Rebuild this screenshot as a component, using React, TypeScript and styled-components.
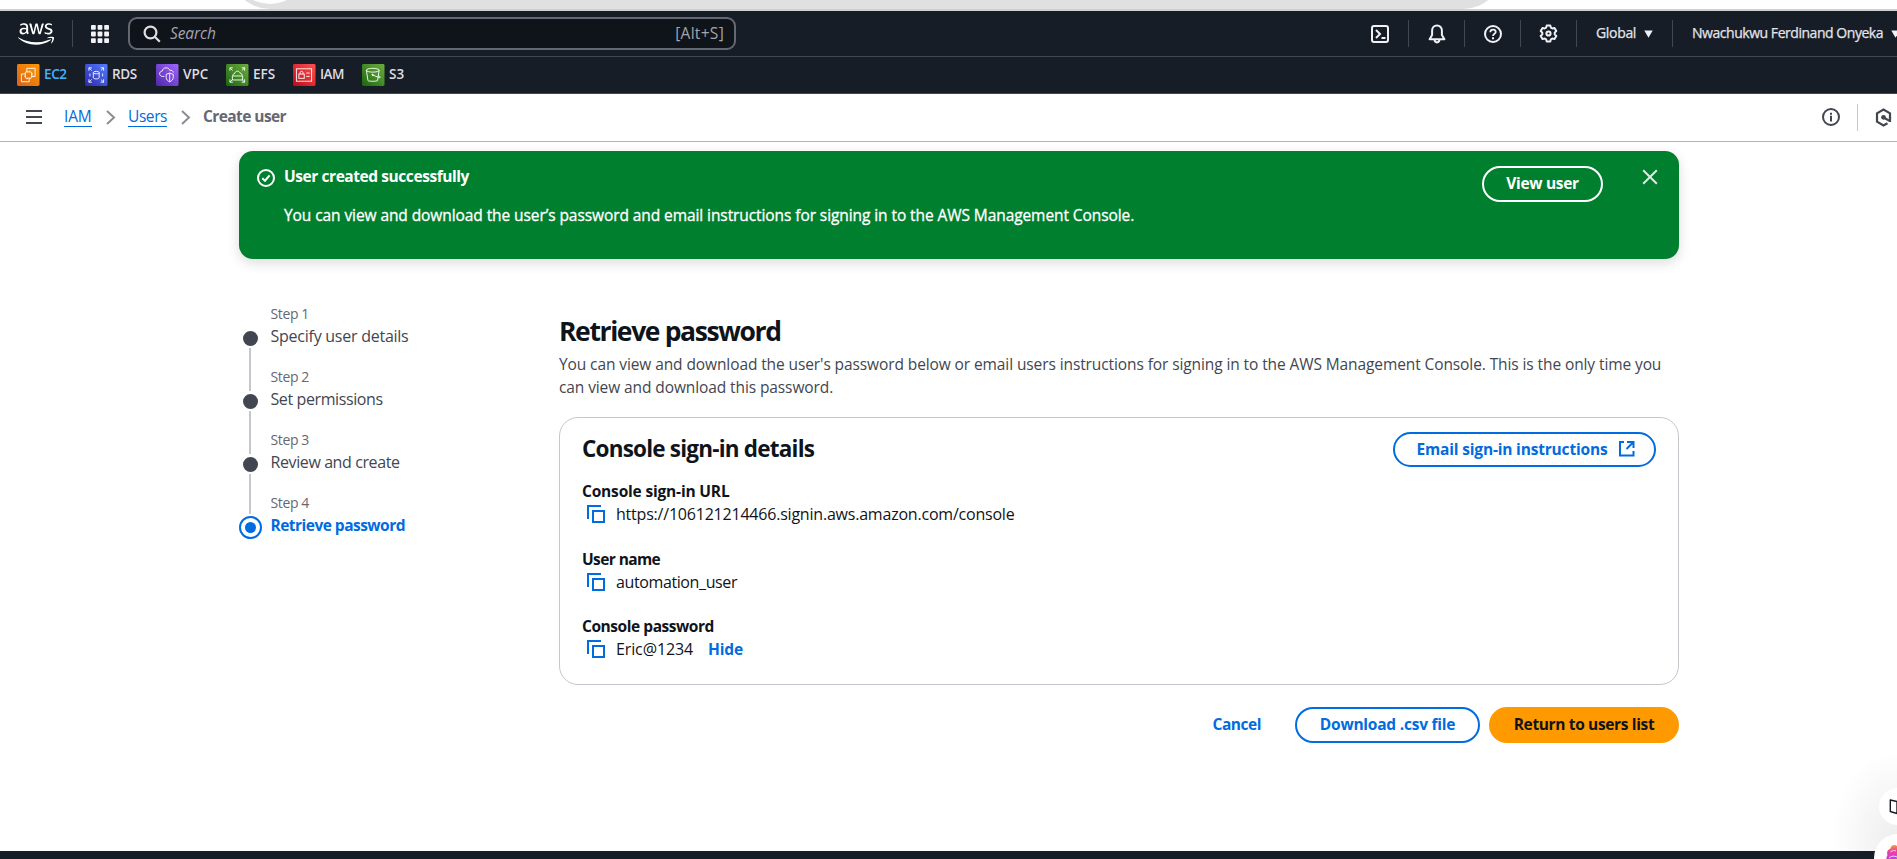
import React from "react";
import styled, { createGlobalStyle, css } from "styled-components";
import { FaAws } from "react-icons/fa";

const GlobalStyle = createGlobalStyle`
  *, *::before, *::after { box-sizing: border-box; }
  html, body { margin: 0; padding: 0; background: #fff; overflow: hidden; }
  body { font-family: "Open Sans", "Noto Sans", sans-serif; color: #0f141a; }
  h1, h2, p, ol { margin: 0; padding: 0; }
  svg { display: block; flex: none; }
`;

const Page = styled.div`
  position: relative;
  display: flex;
  flex-direction: column;
  height: 100vh;
  overflow: hidden;
`;

const tracked = css<{ $track?: number }>`
  letter-spacing: ${(p) => p.$track ?? 0}px;
  white-space: nowrap;
`;

/* ---------- browser chrome edge ---------- */

const ChromeEdge = styled.div`
  position: relative;
  flex: none;
  height: 11px;
  overflow: hidden;
  border-bottom: 2px solid #cdd1cf;
`;

const AddressPill = styled.div`
  position: absolute;
  left: 230px;
  bottom: 0.5px;
  width: 1273px;
  height: 80px;
  border-radius: 40px;
  background: #e0e0e0;
`;

const PillBadge = styled.div`
  position: absolute;
  left: 2px;
  bottom: 4.5px;
  width: 76px;
  height: 76px;
  border-radius: 50%;
  background: #fff;
`;

/* ---------- console header ---------- */

const TopNav = styled.header`
  flex: none;
  display: flex;
  align-items: flex-start;
  height: 46px;
  padding: 6px 0 0 18px;
  background: #161d26;
  border-bottom: 1px solid #424650;
  color: #e4e4ea;
`;

const Divider = styled.span<{ $light?: boolean }>`
  flex: none;
  width: 1px;
  height: 27px;
  background: ${(p) => (p.$light ? "#c6c6cd" : "#424650")};
`;

const NavBrand = styled.div`
  flex: none;
  display: flex;
  align-items: center;
  height: 33px;
  width: 110px;
`;

const LogoBox = styled.div`
  flex: none;
  width: 36px;
  margin-right: 18px;
  color: #fff;
`;

const MenuButton = styled.div`
  margin-left: 18px;
`;

const SearchBox = styled.div`
  flex: none;
  display: flex;
  align-items: center;
  width: 608px;
  height: 33px;
  padding: 0 10px 0 13px;
  border: 2px solid #656871;
  border-radius: 9px;
  background: #0f141a;
  color: #a4a4ad;
`;

const Placeholder = styled.span`
  margin-left: 9px;
  padding-bottom: 1px;
  font-size: 15.5px;
  line-height: 22px;
  font-style: italic;
  ${tracked}
`;

const Shortcut = styled.span`
  margin-left: auto;
  padding-bottom: 1px;
  font-size: 15.5px;
  line-height: 22px;
  ${tracked}
`;

const NavTools = styled.div`
  flex: none;
  display: flex;
  align-items: center;
  height: 33px;
  margin-left: 635px;
`;

const ShellIcon = styled.div`
  flex: none;
  width: 37px;
`;

const ToolIcon = styled.div`
  flex: none;
  display: flex;
  justify-content: center;
  width: 55px;
`;

const NavMenu = styled.div<{ $width: number }>`
  flex: none;
  display: flex;
  align-items: center;
  width: ${(p) => p.$width}px;
  padding-left: 19px;
  gap: 8px;
`;

const NavLabel = styled.span`
  padding-bottom: 2px;
  font-size: 14px;
  line-height: 20px;
  -webkit-text-stroke: 0.25px currentColor;
  ${tracked}
`;

const Favorites = styled.nav`
  flex: none;
  display: flex;
  height: 37px;
  padding: 7px 0 0 17px;
  background: #161d26;
  border-bottom: 1px solid #424650;
`;

const Favorite = styled.a<{ $width: number; $active?: boolean }>`
  flex: none;
  display: flex;
  gap: 4.5px;
  width: ${(p) => p.$width}px;
  height: 22px;
  color: ${(p) => (p.$active ? "#42b4ff" : "#dedee3")};
`;

const FavoriteLabel = styled.span`
  font-size: 13.5px;
  line-height: 20px;
  font-weight: 600;
  ${tracked}
`;

/* ---------- breadcrumbs ---------- */

const CrumbBar = styled.div`
  flex: none;
  display: flex;
  align-items: center;
  height: 48px;
  padding: 0 0 1px 26px;
  border-bottom: 1px solid #b4b4bb;
`;

const Crumbs = styled.div`
  display: flex;
  align-items: center;
  margin-left: 22px;
`;

const CrumbLink = styled.a<{ $width: number }>`
  width: ${(p) => p.$width}px;
  height: 20px;
  border-bottom: 1px solid #006ce0;
  color: #006ce0;
  font-size: 15.5px;
  line-height: 18px;
  ${tracked}
`;

const CrumbChevron = styled.span`
  width: 36px;
  padding-left: 14px;
`;

const CrumbCurrent = styled.span`
  padding-bottom: 2px;
  color: #656871;
  font-size: 15.5px;
  line-height: 20px;
  font-weight: 700;
  ${tracked}
`;

const CrumbTools = styled.div`
  display: flex;
  align-items: center;
  width: 75px;
  margin-left: auto;
  gap: 17px;
`;

/* ---------- content ---------- */

const Content = styled.main`
  flex: 1;
  width: 1440px;
  margin-left: 239px;
  padding-top: 9px;
`;

const Flash = styled.section`
  display: flex;
  height: 108px;
  padding: 13px 21px 0 18px;
  border-radius: 14px;
  background: #00802f;
  color: #fff;
  box-shadow: 0 4px 12px 1px rgba(0, 7, 22, 0.12);
`;

const FlashIcon = styled.div`
  width: 27px;
  padding-top: 5px;
`;

const FlashBody = styled.div`
  flex: 1;
  display: flex;
  flex-direction: column;
  gap: 15px;
  font-size: 15.5px;
  line-height: 24px;
`;

const FlashTitle = styled.div`
  font-weight: 700;
  ${tracked}
`;

const FlashText = styled.div`
  -webkit-text-stroke: 0.3px currentColor;
  ${tracked}
`;

const CloseButton = styled.button`
  width: 16px;
  height: 16px;
  margin: 5px 0 0 39px;
  padding: 0;
  border: 0;
  background: none;
  color: #dfe9e2;
`;

type Tone = "onColor" | "outline" | "primary";

const tones: Record<Tone, string> = {
  onColor: "border-color: #fff; color: #fff; background: transparent;",
  outline: "border-color: #006ce0; color: #006ce0; background: #fff;",
  primary: "border-color: #ff9900; color: #0f141a; background: #ff9900;",
};

const Button = styled.button<{ $tone: Tone; $width: number; $height?: number; $track?: number; $iconEnd?: boolean }>`
  flex: none;
  display: flex;
  align-items: center;
  justify-content: center;
  gap: 11px;
  width: ${(p) => p.$width}px;
  height: ${(p) => p.$height ?? 36}px;
  padding: 0 0 2px ${(p) => (p.$iconEnd ? 3 : 0)}px;
  border: 2px solid;
  border-radius: 18px;
  font: 700 15.5px/24px "Open Sans", sans-serif;
  ${(p) => tones[p.$tone]}
  ${tracked}
`;

const FlashAction = styled.div`
  padding-top: 2px;
`;

const Wizard = styled.div`
  display: flex;
  padding-top: 45px;
`;

const StepList = styled.ol`
  width: 320px;
  list-style: none;
`;

const Step = styled.li`
  display: flex;
  gap: 8.5px;
  height: 63px;
`;

const StepRail = styled.div<{ $active?: boolean }>`
  flex: none;
  display: flex;
  flex-direction: column;
  width: 23px;
  height: 63px;
  padding-top: ${(p) => (p.$active ? 22.5 : 26.5)}px;
`;

const StepDot = styled.span<{ $active?: boolean }>`
  flex: none;
  ${(p) =>
    p.$active
      ? css`
          display: flex;
          align-items: center;
          justify-content: center;
          width: 23px;
          height: 23px;
          border: 2px solid #006ce0;
          border-radius: 50%;
          &::after {
            content: "";
            width: 11px;
            height: 11px;
            border-radius: 50%;
            background: #006ce0;
          }
        `
      : css`
          width: 15.5px;
          height: 15.5px;
          margin-left: 3.5px;
          border-radius: 50%;
          background: #424650;
        `}
`;

const StepLine = styled.span<{ $height: number }>`
  flex: none;
  width: 2px;
  height: ${(p) => p.$height}px;
  margin: 2px 0 0 10px;
  background: #c6c6cd;
`;

const StepNumber = styled.div`
  font-size: 14px;
  line-height: 20px;
  color: #656871;
  ${tracked}
`;

const StepName = styled.div<{ $active?: boolean }>`
  font-size: ${(p) => (p.$active ? 15.5 : 16)}px;
  line-height: 24px;
  font-weight: ${(p) => (p.$active ? 700 : 400)};
  color: ${(p) => (p.$active ? "#006ce0" : "#424650")};
  ${tracked}
`;

const Panel = styled.div`
  width: 1120px;
  padding-top: 11px;
`;

const PageTitle = styled.h1`
  font-size: 26.5px;
  line-height: 32px;
  font-weight: 700;
  ${tracked}
`;

const Intro = styled.p`
  margin-top: 6px;
  margin-bottom: 18px;
  color: #424650;
  font-size: 15.5px;
  line-height: 23px;
  ${tracked}
`;

const Card = styled.section`
  height: 268px;
  padding: 14px 22px 0;
  border: 1px solid #c6c6cd;
  border-radius: 19px;
`;

const CardHeader = styled.div`
  display: flex;
  justify-content: space-between;
  height: 48px;
`;

const CardTitle = styled.h2`
  padding-top: 3px;
  font-size: 22.5px;
  line-height: 28px;
  font-weight: 700;
  ${tracked}
`;

const Field = styled.div<{ $height: number }>`
  height: ${(p) => p.$height}px;
`;

const FieldLabel = styled.div`
  font-size: 15.5px;
  line-height: 22px;
  font-weight: 700;
  ${tracked}
`;

const FieldValue = styled.div`
  display: flex;
  align-items: center;
  height: 24px;
  padding-left: 5px;
`;

const FieldText = styled.span`
  margin-left: 11px;
  font-size: 16px;
  line-height: 24px;
  ${tracked}
`;

const InlineAction = styled.a`
  margin-left: 15px;
  color: #006ce0;
  font-size: 15.5px;
  line-height: 24px;
  font-weight: 700;
  ${tracked}
`;

const Actions = styled.div`
  display: flex;
  justify-content: flex-end;
  align-items: center;
  gap: 9px;
  margin-top: 22px;
`;

const CancelLink = styled.a`
  margin-right: 25px;
  padding-bottom: 2px;
  color: #006ce0;
  font-size: 15.5px;
  line-height: 24px;
  font-weight: 700;
  ${tracked}
`;

const FooterBar = styled.footer`
  flex: none;
  height: 8px;
  background: #161d26;
`;

/* ---------- floating extension bubbles ---------- */

const Bubble = styled.div<{ $size: number; $top: number; $left: number }>`
  position: absolute;
  left: ${(p) => p.$left}px;
  top: ${(p) => p.$top}px;
  display: flex;
  align-items: center;
  justify-content: center;
  width: ${(p) => p.$size}px;
  height: ${(p) => p.$size}px;
  border-radius: 50%;
  background: #fff;
`;

const BubbleShade = styled.div`
  position: absolute;
  left: 1827px;
  top: 750px;
  width: 70px;
  height: 101px;
  background: radial-gradient(ellipse 66px 88px at 70px 88px, rgba(0, 0, 0, 0.07), rgba(0, 0, 0, 0.03) 55%, transparent);
`;

/* ---------- icons ---------- */

const MenuGrid = () => (
  <svg width="18" height="18" viewBox="0 0 18 18" fill="#f3f3f7">
    {[0, 6.6, 13.2].map((y) => [0, 6.6, 13.2].map((x) => <rect key={`${x}-${y}`} x={x} y={y} width="4.8" height="4.8" rx="0.8" />))}
  </svg>
);

const SearchIcon = () => (
  <svg width="18" height="18" viewBox="0 0 18 18" fill="none" stroke="#dedee3" strokeWidth="2.2">
    <circle cx="7.5" cy="7.5" r="5.9" />
    <path d="M12 12l4.8 4.8" />
  </svg>
);

const TerminalIcon = () => (
  <svg width="18" height="18" viewBox="0 0 18 18" fill="none" stroke="#f0f0f5" strokeWidth="2">
    <rect x="1" y="1" width="16" height="16" rx="2" />
    <path d="M5 5l4 4-4 4M10.5 13h4" />
  </svg>
);

const BellIcon = () => (
  <svg width="18" height="20" viewBox="0 0 18 20" fill="none" stroke="#f0f0f5" strokeWidth="2" strokeLinejoin="round">
    <path d="M9 1.6c-3 0-4.9 2.2-4.9 5V11L1.6 15.2h14.8L13.9 11V6.6c0-2.8-1.9-5-4.9-5z" />
    <path d="M6.6 15.6c0 1.7.9 2.8 2.4 2.8s2.4-1.1 2.4-2.8" />
  </svg>
);

const HelpIcon = () => (
  <svg width="18" height="18" viewBox="0 0 18 18" fill="none" stroke="#f0f0f5" strokeWidth="2">
    <circle cx="9" cy="9" r="8" />
    <path d="M6.3 7.2C6.3 5.6 7.4 4.7 9 4.700s2.700.9 2.700 2.300C11.700 8.900 9 8.700 9 11" strokeWidth="1.8" />
    <path d="M9 12.300v2" />
  </svg>
);

const GearIcon = () => (
  <svg width="19" height="19" viewBox="0 0 19 19" fill="none" stroke="#f0f0f5" strokeWidth="2" strokeLinejoin="round">
    <path d="M7.700 1.500h3.600l.6 2.200 1.400.8 2.200-.6 1.800 3.100-1.600 1.600v1.800l1.600 1.600-1.800 3.100-2.200-.6-1.400.8-.6 2.200H7.700l-.6-2.200-1.400-.8-2.200.6L1.700 12l1.600-1.600V8.600L1.700 7l1.800-3.100 2.200.6 1.400-.8z" />
    <circle cx="9.500" cy="9.500" r="2.100" />
  </svg>
);

const Caret = () => (
  <svg width="9" height="8" viewBox="0 0 9 8" fill="#f0f0f5">
    <path d="M0.300 0.500h8.400L4.500 7.800z" />
  </svg>
);

const HamburgerIcon = () => (
  <svg width="16" height="16" viewBox="0 0 16 16" stroke="#424650" strokeWidth="2">
    <path d="M0 2h16M0 8h16M0 14h16" />
  </svg>
);

const ChevronIcon = () => (
  <svg width="10" height="15" viewBox="0 0 10 15" fill="none" stroke="#8c8c94" strokeWidth="2">
    <path d="M1 1l7 6.500L1 14" />
  </svg>
);

const InfoIcon = () => (
  <svg width="18" height="18" viewBox="0 0 18 18" fill="none" stroke="#424650" strokeWidth="2">
    <circle cx="9" cy="9" r="8" />
    <path d="M9 7.800v5.700M9 4.700v2" />
  </svg>
);

const HexIcon = () => (
  <svg width="17" height="19" viewBox="0 0 17 19" fill="none" stroke="#424650" strokeWidth="2.200">
    <path d="M15 10.500V5.300L8.500 1.500 2 5.300v8.400l6.500 3.800 4-2.300" />
    <path d="M8.500 9.500l6.500 3.600" />
    <circle cx="8.500" cy="9.300" r="2.400" fill="#424650" stroke="none" />
    <path d="M15 9v5" />
  </svg>
);

const CheckCircle = () => (
  <svg width="18" height="18" viewBox="0 0 18 18" fill="none" stroke="#fff" strokeWidth="2">
    <circle cx="9" cy="9" r="8" />
    <path d="M5.300 9.300L8 11.700l4.600-5.400" />
  </svg>
);

const CloseIcon = () => (
  <svg width="16" height="16" viewBox="0 0 16 16" fill="none" stroke="currentColor" strokeWidth="2">
    <path d="M1.200 1.200l13.600 13.600M14.800 1.200L1.200 14.800" />
  </svg>
);

const CopyIcon = () => (
  <svg width="18" height="18" viewBox="0 0 18 18" fill="none" stroke="#006ce0" strokeWidth="2">
    <path d="M1 14V1h13" />
    <rect x="6" y="6" width="11" height="11" />
  </svg>
);

const ExternalIcon = () => (
  <svg width="17" height="17" viewBox="0 0 17 17" fill="none" stroke="currentColor" strokeWidth="2">
    <path d="M6 2H2v13.500h13.500V11M9 2h6.500V8M15.500 2L8.500 9" />
  </svg>
);

type ServiceKind = "ec2" | "rds" | "vpc" | "efs" | "iam" | "s3";

const serviceColors: Record<ServiceKind, [string, string]> = {
  ec2: ["#d9621a", "#ff9900"],
  rds: ["#2e27ad", "#527fff"],
  vpc: ["#4d27a8", "#a166ff"],
  efs: ["#1b660f", "#6cae3e"],
  iam: ["#bd0816", "#ff5252"],
  s3: ["#1b660f", "#6cae3e"],
};

const cornerArrows = "M4 7V4h3M4 4l2.800 2.800M16 4h3v3M19 4l-2.800 2.800M4 16v3h3M4 19l2.800-2.800M16 19h3v-3M19 19l-2.800-2.800";

const servicePaths: Record<ServiceKind, React.ReactNode> = {
  ec2: (
    <>
      <path d="M10 8V4.500h8.500V13H15.500M7 10.500H4.500V18.500h8V16" />
      <rect x="8.500" y="8.300" width="6.500" height="6.500" rx="1" />
      <path d="M10.300 8.300V7M13 8.300V7M10.300 16v-1.200M13 16v-1.200M8.500 10.300H7.300M8.500 12.800H7.300M16.200 10.300H15M16.200 12.800H15" />
    </>
  ),
  rds: (
    <>
      <path d={cornerArrows} />
      <ellipse cx="11.500" cy="9" rx="3" ry="1.300" />
      <path d="M8.500 9v5.200c0 .8 1.400 1.400 3 1.400s3-.6 3-1.400V9M5 10v3M18 10v3" />
    </>
  ),
  vpc: (
    <>
      <path d="M8.500 13H7c-2 0-3.300-1.200-3.300-2.800S4.800 7.600 6.300 7.500C6.600 5.300 8.300 4 10.300 4c2 0 3.200 1 3.800 2.600 1.800-.4 3.400.6 3.600 2.400" />
      <path d="M14 9.500l3.600 1.300v3.400c0 2-1.700 3.600-3.600 4.500-1.900-.9-3.600-2.500-3.600-4.500v-3.400zM14 9.500v9" />
    </>
  ),
  efs: (
    <>
      <path d={cornerArrows} />
      <path d="M6.500 12.500h10.500v4.200H6.500zM7 12.300c0-1.500.8-2.300 2-2.500.3-1.500 1.300-2.300 2.700-2.300 1.400 0 2.300.8 2.600 2.100 1.400 0 2.200.9 2.200 2.500" />
    </>
  ),
  iam: (
    <>
      <rect x="3.500" y="5" width="15.500" height="13" />
      <rect x="6" y="10.500" width="5.500" height="4.500" />
      <path d="M7.300 10.500V9c0-1.800 2.900-1.800 2.900 0v1.500M13.500 9.500h3.500M13.500 13h3.500" />
    </>
  ),
  s3: (
    <>
      <ellipse cx="11" cy="6.500" rx="6.500" ry="2" />
      <path d="M4.500 6.500l1.600 10.800c.3 1 9.500 1 9.800 0L17.500 6.500M10.500 11.300l7.300 3c1 .3 1.300-.7.300-1.300l-1.400-.9" />
      <circle cx="10.800" cy="11.300" r="0.700" fill="#fff" />
    </>
  ),
};

const ServiceIcon = ({ kind }: { kind: ServiceKind }) => (
  <svg width="22.5" height="22" viewBox="0 0 23 23" preserveAspectRatio="none">
    <defs>
      <linearGradient id={`tile-${kind}`} x1="0" y1="1" x2="1" y2="0">
        <stop offset="0" stopColor={serviceColors[kind][0]} />
        <stop offset="1" stopColor={serviceColors[kind][1]} />
      </linearGradient>
    </defs>
    <rect width="23" height="23" rx="1.5" fill={`url(#tile-${kind})`} />
    <g fill="none" stroke="#fff" strokeWidth="1" strokeOpacity="0.92">{servicePaths[kind]}</g>
  </svg>
);

const BookIcon = () => (
  <svg width="17" height="16" viewBox="0 0 17 16" fill="none" stroke="#16181d" strokeWidth="1.4" strokeLinejoin="round">
    <path d="M8 2.500L1.300 1v11.500L8 14.500M8 2.500v12M8 2.500L15.700 1v11.500L8 14.500" />
  </svg>
);

const BrainIcon = () => (
  <svg width="24" height="28" viewBox="0 0 24 28">
    <defs>
      <linearGradient id="brain" x1="0.2" y1="0" x2="0.3" y2="1">
        <stop offset="0" stopColor="#ff9a2e" />
        <stop offset="0.25" stopColor="#f0409a" />
        <stop offset="0.6" stopColor="#c13cf0" />
        <stop offset="1" stopColor="#5a5cff" />
      </linearGradient>
    </defs>
    <path d="M12 3C10 0 5 .5 4.500 4.500 1 6 .5 9 1.500 11-.5 14 0 18 2.500 20c.5 4 5 6 9.500 5 4.500 1 9-1 9.500-5 2.500-2 3-6 1-9 1-2 .5-5-3-6.500C19 .5 14 0 12 3z" fill="url(#brain)" />
    <path d="M4.500 8c2-2 4-1.500 5.500-1M3 14c2-2 5-2.500 8-1" stroke="#ffd0f4" strokeWidth="1" fill="none" />
  </svg>
);

/* ---------- data ---------- */

const favorites: { kind: ServiceKind; label: string; width: number; track: number }[] = [
  { kind: "ec2", label: "EC2", width: 68, track: -0.4 },
  { kind: "rds", label: "RDS", width: 71, track: -0.4 },
  { kind: "vpc", label: "VPC", width: 70, track: 0 },
  { kind: "efs", label: "EFS", width: 67, track: 0 },
  { kind: "iam", label: "IAM", width: 69, track: -0.5 },
  { kind: "s3", label: "S3", width: 60, track: 0 },
];

const steps = [
  { name: "Specify user details", track: -0.25 },
  { name: "Set permissions", track: -0.4 },
  { name: "Review and create", track: -0.4 },
  { name: "Retrieve password", track: -0.52 },
];

const fields = [
  { label: "Console sign-in URL", labelTrack: -0.18, value: "https://106121214466.signin.aws.amazon.com/console", track: -0.21, height: 68 },
  { label: "User name", labelTrack: -0.6, value: "automation_user", track: -0.39, height: 67 },
  { label: "Console password", labelTrack: -0.45, value: "Eric@1234", track: -0.12, height: 67, action: "Hide" },
];

export default function App() {
  return (
    <Page>
      <GlobalStyle />
      <ChromeEdge>
        <AddressPill>
          <PillBadge />
        </AddressPill>
      </ChromeEdge>

      <TopNav>
        <NavBrand>
          <LogoBox>
            <FaAws size={36} />
          </LogoBox>
          <Divider />
          <MenuButton><MenuGrid /></MenuButton>
        </NavBrand>
        <SearchBox>
          <SearchIcon />
          <Placeholder $track={-0.1}>Search</Placeholder>
          <Shortcut $track={0.3}>[Alt+S]</Shortcut>
        </SearchBox>
        <NavTools>
          <ShellIcon><TerminalIcon /></ShellIcon>
          <Divider />
          <ToolIcon><BellIcon /></ToolIcon>
          <Divider />
          <ToolIcon><HelpIcon /></ToolIcon>
          <Divider />
          <ToolIcon><GearIcon /></ToolIcon>
          <Divider />
          <NavMenu $width={95}>
            <NavLabel $track={-0.33}>Global</NavLabel>
            <Caret />
          </NavMenu>
          <Divider />
          <NavMenu $width={240}>
            <NavLabel $track={-0.46}>Nwachukwu Ferdinand Onyeka</NavLabel>
            <Caret />
          </NavMenu>
        </NavTools>
      </TopNav>

      <Favorites>
        {favorites.map((f) => (
          <Favorite key={f.kind} $width={f.width} $active={f.kind === "ec2"}>
            <ServiceIcon kind={f.kind} />
            <FavoriteLabel $track={f.track}>{f.label}</FavoriteLabel>
          </Favorite>
        ))}
      </Favorites>

      <CrumbBar>
        <HamburgerIcon />
        <Crumbs>
          <CrumbLink $width={28} $track={-0.13}>IAM</CrumbLink>
          <CrumbChevron><ChevronIcon /></CrumbChevron>
          <CrumbLink $width={39} $track={-0.42}>Users</CrumbLink>
          <CrumbChevron><ChevronIcon /></CrumbChevron>
          <CrumbCurrent $track={-0.58}>Create user</CrumbCurrent>
        </Crumbs>
        <CrumbTools>
          <InfoIcon />
          <Divider $light />
          <HexIcon />
        </CrumbTools>
      </CrumbBar>

      <Content>
        <Flash>
          <FlashIcon><CheckCircle /></FlashIcon>
          <FlashBody>
            <FlashTitle $track={-0.43}>User created successfully</FlashTitle>
            <FlashText $track={-0.083}>
              You can view and download the user’s password and email instructions for signing in to the AWS Management Console.
            </FlashText>
          </FlashBody>
          <FlashAction>
            <Button $tone="onColor" $width={121} $track={-0.31}>View user</Button>
          </FlashAction>
          <CloseButton aria-label="Dismiss"><CloseIcon /></CloseButton>
        </Flash>

        <Wizard>
          <StepList>
            {steps.map((s, i) => {
              const active = i === steps.length - 1;
              return (
                <Step key={s.name}>
                  <StepRail $active={active}>
                    <StepDot $active={active} />
                    {!active && <StepLine $height={i === steps.length - 2 ? 40 : 43} />}
                  </StepRail>
                  <div>
                    <StepNumber $track={-0.38}>Step {i + 1}</StepNumber>
                    <StepName $active={active} $track={s.track}>{s.name}</StepName>
                  </div>
                </Step>
              );
            })}
          </StepList>

          <Panel>
            <PageTitle $track={-1.38}>Retrieve password</PageTitle>
            <Intro $track={-0.1}>
              You can view and download the user's password below or email users instructions for signing in to the AWS Management Console. This is the only time you
              <br />
              can view and download this password.
            </Intro>
            <Card>
              <CardHeader>
                <CardTitle $track={-0.79}>Console sign-in details</CardTitle>
                <Button $tone="outline" $width={263} $height={35} $track={-0.18} $iconEnd>
                  Email sign-in instructions
                  <ExternalIcon />
                </Button>
              </CardHeader>
              {fields.map((f) => (
                <Field key={f.label} $height={f.height}>
                  <FieldLabel $track={f.labelTrack}>{f.label}</FieldLabel>
                  <FieldValue>
                    <CopyIcon />
                    <FieldText $track={f.track}>{f.value}</FieldText>
                    {f.action && <InlineAction $track={-0.15}>{f.action}</InlineAction>}
                  </FieldValue>
                </Field>
              ))}
            </Card>
            <Actions>
              <CancelLink $track={-0.47}>Cancel</CancelLink>
              <Button $tone="outline" $width={185} $track={-0.23}>Download .csv file</Button>
              <Button $tone="primary" $width={190} $track={-0.355}>Return to users list</Button>
            </Actions>
          </Panel>
        </Wizard>
      </Content>

      <FooterBar />
      <BubbleShade />
      <Bubble $size={37} $left={1879} $top={788}>
        <BookIcon />
      </Bubble>
      <Bubble $size={48} $left={1874} $top={834}>
        <BrainIcon />
      </Bubble>
    </Page>
  );
}
